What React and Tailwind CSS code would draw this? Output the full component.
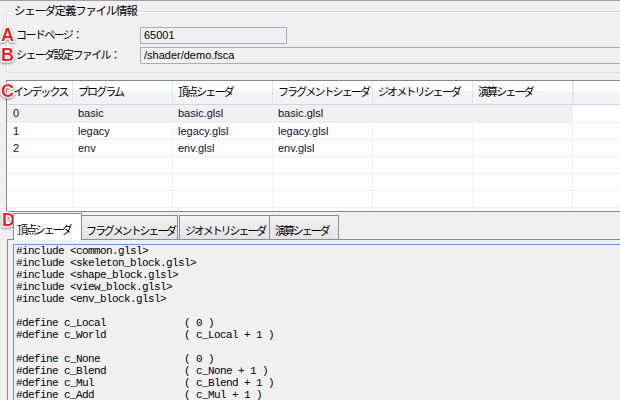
import React from "react";

const UI = "font-['Liberation_Sans','Noto_Sans_CJK_JP',sans-serif]";

function Mark({ ch, className }) {
  return (
    <span
      className={`absolute font-['Liberation_Sans',sans-serif] font-bold text-[18px] leading-none text-[#e4252c] [-webkit-text-stroke:3px_white] [paint-order:stroke_fill] [filter:drop-shadow(0_1px_1px_rgba(0,0,0,0.45))] ${className}`}
    >
      {ch}
    </span>
  );
}

const cols = [
  { label: "インデックス", w: "w-[66px] pl-[6px]" },
  { label: "プログラム", w: "w-[100px] pl-[5px]" },
  { label: "頂点シェーダ", w: "w-[100px] pl-[5px]" },
  { label: "フラグメントシェーダ", w: "w-[100px] pl-[5px]" },
  { label: "ジオメトリシェーダ", w: "w-[100px] pl-[5px]" },
  { label: "演算シェーダ", w: "w-[100px] pl-[5px]" },
];

const rows = [
  ["0", "basic", "basic.glsl", "basic.glsl", "", ""],
  ["1", "legacy", "legacy.glsl", "legacy.glsl", "", ""],
  ["2", "env", "env.glsl", "env.glsl", "", ""],
  ["", "", "", "", "", ""],
  ["", "", "", "", "", ""],
  ["", "", "", "", "", ""],
  ["", "", "", "", "", ""],
];

const codeLines = [
  "#include <common.glsl>",
  "#include <skeleton_block.glsl>",
  "#include <shape_block.glsl>",
  "#include <view_block.glsl>",
  "#include <env_block.glsl>",
  "",
  "#define c_Local             ( 0 )",
  "#define c_World             ( c_Local + 1 )",
  "",
  "#define c_None              ( 0 )",
  "#define c_Blend             ( c_None + 1 )",
  "#define c_Mul               ( c_Blend + 1 )",
  "#define c_Add               ( c_Mul + 1 )",
];

const J = "tracking-[-1.6px]";
const H = "tracking-[-1.9px]";
const TAB = "text-[11px] tracking-[-2.1px] leading-[14px] whitespace-nowrap";

export default function App() {
  return (
    <div className={`relative w-[620px] h-[400px] overflow-hidden bg-[#f0f0f0] border-t border-[#a0a0a0] text-[11px] text-black ${UI}`}>
      {/* Group box */}
      <div className="relative ml-[6px] mt-[10px] w-[640px] h-[62px] border border-[#d5dfe5] rounded-[3px] shadow-[inset_1px_1px_0_white]">
        <span className="absolute left-[5px] -top-[8px] bg-[#f0f0f0] px-[2px] leading-[14px] text-[11.5px] tracking-[-1.3px]">
          シェーダ定義ファイル情報
        </span>
        <div className="pt-[15px] flex flex-col gap-[3px]">
          <div className="flex items-center h-[17px]">
            <div className={`w-[133px] pl-[9px] leading-[17px] ${J}`}>コードページ：</div>
            <div className="w-[147px] h-[17px] border border-[#abadb3] pl-[3px] leading-[15px]">65001</div>
          </div>
          <div className="flex items-center h-[17px]">
            <div className={`w-[133px] pl-[9px] leading-[17px] ${J}`}>シェーダ設定ファイル：</div>
            <div className="w-[500px] h-[17px] border border-[#abadb3] pl-[3px] leading-[15px]">/shader/demo.fsca</div>
          </div>
        </div>
      </div>

      {/* List view */}
      <div className="ml-[6px] mt-[7px] w-[640px] h-[132px] border border-[#828790] bg-white overflow-hidden">
        <div className="flex h-[24px] border-b border-[#d5d5d5] bg-[linear-gradient(#ffffff_0%,#ffffff_42%,#f2f3f5_43%,#f2f3f5_100%)]">
          {cols.map((c) => (
            <div key={c.label} className={`${c.w} ${H} shrink-0 border-r border-[#e3e4e6] flex items-center whitespace-nowrap overflow-hidden`}>
              {c.label}
            </div>
          ))}
          <div className="flex-1 border-l border-[#e3e4e6]" />
        </div>
        {rows.map((r, i) => (
          <div key={i} className={`flex ${i === 0 ? "h-[18px]" : "h-[17px]"} border-b border-[#f0f0f0]`}>
            {r.map((v, j) => (
              <div
                key={j}
                className={`${cols[j].w} shrink-0 border-r border-[#f0f0f0] flex items-center whitespace-nowrap text-[#10102a] ${i === 0 ? "bg-[#f0f0f0]" : ""}`}
              >
                {v}
              </div>
            ))}
            <div className="flex-1" />
          </div>
        ))}
      </div>

      {/* Tab control */}
      <div className="mt-[1px] ml-[7px]">
        <div className="flex items-end h-[26px] pl-[6px]">
          <div className={`relative z-10 -mb-px h-[27px] w-[69px] bg-white border border-b-0 border-[#898c95] pl-[3px] pt-[9px] ${TAB}`}>
            頂点シェーダ
          </div>
          <div className={`h-[24px] w-[96px] border border-b-0 border-l-0 border-[#898c95] bg-[linear-gradient(#f2f2f2,#e3e3e3)] pl-[4px] pt-[8px] ${TAB}`}>
            フラグメントシェーダ
          </div>
          <div className={`ml-px h-[24px] w-[91px] border border-b-0 border-[#898c95] bg-[linear-gradient(#f2f2f2,#e3e3e3)] pl-[5px] pt-[8px] ${TAB}`}>
            ジオメトリシェーダ
          </div>
          <div className={`h-[24px] w-[69px] border border-b-0 border-l-0 border-[#898c95] bg-[linear-gradient(#f2f2f2,#e3e3e3)] pl-[5px] pt-[8px] ${TAB}`}>
            演算シェーダ
          </div>
        </div>
        <div className="border-t border-l border-[#898c95] h-[200px] pt-[4px] pl-[5px]">
          <div className="border-t border-l border-[#569de5] h-[200px] pl-[2px] w-[700px]">
            <div className="font-['Liberation_Mono',monospace] text-[11px] tracking-[-0.6px] leading-[12px] text-black">
              {codeLines.map((l, i) => (
                <div key={i} className="h-[12px] whitespace-pre">{l}</div>
              ))}
            </div>
          </div>
        </div>
      </div>

      <Mark ch="A" className="left-[1px] top-[25px]" />
      <Mark ch="B" className="left-[1px] top-[45px]" />
      <Mark ch="C" className="left-[1px] top-[81px]" />
      <Mark ch="D" className="left-[2px] top-[210px]" />
    </div>
  );
}
